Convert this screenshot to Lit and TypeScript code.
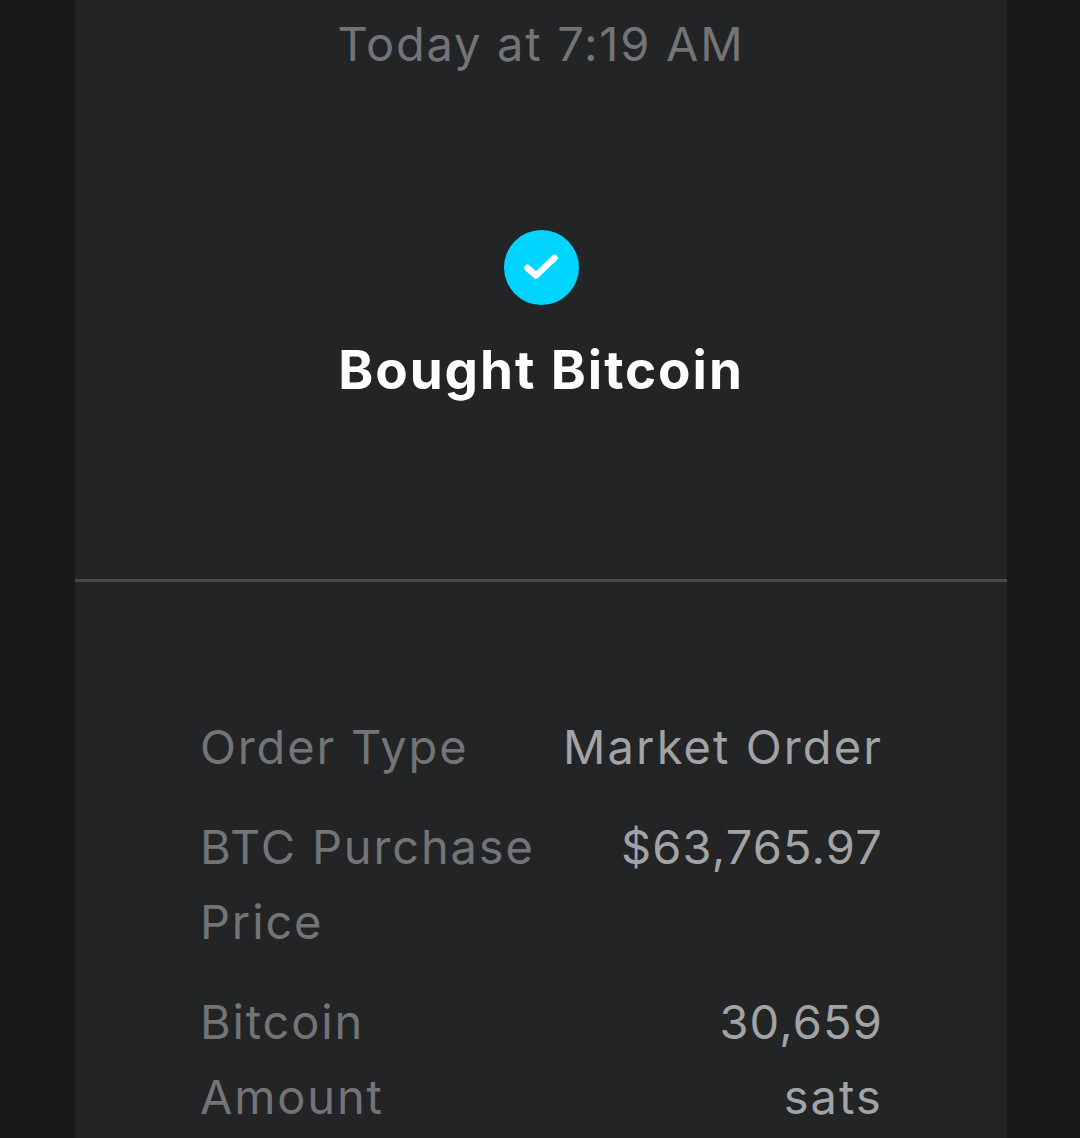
import { LitElement, html, css } from "lit";
import { customElement } from "lit/decorators.js";

const ROWS: [string, string[]][] = [
  ["Order Type", ["Market Order"]],
  ["BTC Purchase Price", ["$63,765.97"]],
  ["Bitcoin Amount", ["30,659", "sats"]],
];

@customElement("app-root")
export class AppRoot extends LitElement {
  static styles = css`
    :host {
      display: block;
      width: 1080px;
      height: 1138px;
      overflow: hidden;
      background: #17181a;
      font-family: Inter, "Liberation Sans", sans-serif;
    }
    .card {
      box-sizing: border-box;
      width: 932px;
      height: 1138px;
      margin-left: 75px;
      background: #232426;
      overflow: hidden;
    }
    .head {
      display: flex;
      flex-direction: column;
      align-items: center;
      box-sizing: border-box;
      height: 582px;
      padding-top: 14px;
      border-bottom: 3px solid #47484a;
    }
    .time {
      font-size: 47px;
      line-height: 60px;
      color: #737476;
      letter-spacing: 1.75px;
    }
    .check {
      display: block;
      width: 75px;
      height: 75px;
      margin-top: 156px;
    }
    .title {
      font-size: 53px;
      line-height: 64px;
      font-weight: 700;
      color: #ffffff;
      letter-spacing: 1.95px;
      margin-top: 33px;
    }
    .rows {
      display: flex;
      flex-direction: column;
      gap: 25px;
      padding: 127px 124px 0 125px;
    }
    .row {
      display: flex;
      justify-content: space-between;
      font-size: 47px;
      line-height: 75px;
    }
    .label {
      width: 340px;
      color: #737476;
      letter-spacing: 1.85px;
    }
    .value {
      text-align: right;
      color: #a2a3a5;
    }
    .line {
      white-space: nowrap;
      letter-spacing: 2.1px;
    }
    .line.num {
      letter-spacing: 1.15px;
    }
  `;

  render() {
    return html`
      <div class="card">
        <div class="head">
          <div class="time">Today at 7:19 AM</div>
          <svg class="check" viewBox="0 0 75 75">
            <circle cx="37.5" cy="37.5" r="37.5" fill="#00d4ff"></circle>
            <path
              d="M23.5 38 L32 45.5 L50.5 28"
              fill="none"
              stroke="#fff"
              stroke-width="6.5"
              stroke-linecap="round"
              stroke-linejoin="round"
            ></path>
          </svg>
          <div class="title">Bought Bitcoin</div>
        </div>
        <div class="rows">
          ${ROWS.map(
            ([l, v]) => html`
              <div class="row">
                <div class="label">${l}</div>
                <div class="value">
                  ${v.map((x) => html`<div class="line ${/\d/.test(x) ? "num" : ""}">${x}</div>`)}
                </div>
              </div>
            `
          )}
        </div>
      </div>
    `;
  }
}
